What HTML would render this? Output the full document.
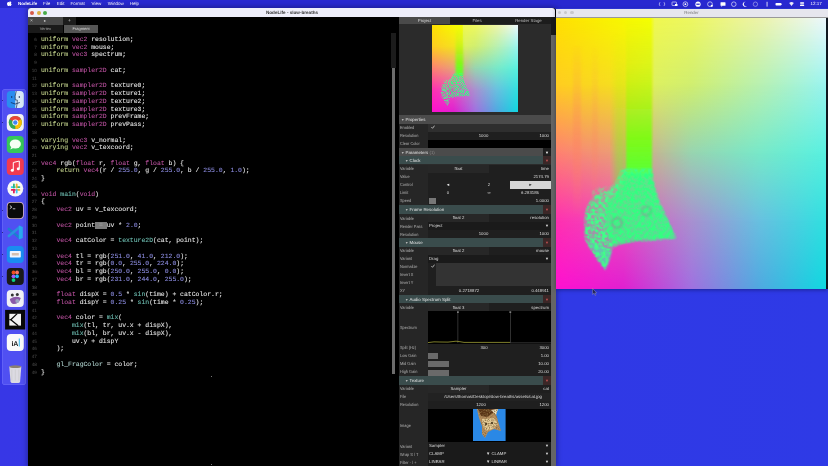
<!DOCTYPE html>
<html><head><meta charset="utf-8">
<style>
*{margin:0;padding:0;box-sizing:border-box}
html,body{width:828px;height:466px;overflow:hidden}
body{text-rendering:geometricPrecision;background:linear-gradient(to right,#3737e6,#3238e6 40%,#2e3ae6);font-family:"Liberation Sans",sans-serif;position:relative}
.a{position:absolute}
.t{position:absolute;font-size:4.3px;line-height:8px;white-space:nowrap;color:#ccc}
#menubar{will-change:transform;left:0;top:0;width:828px;height:8px;background:#2828d0;color:#fff;font-size:4.5px;font-weight:bold}
#menubar span{position:absolute;top:1.2px;line-height:6px}
#dock{left:2px;top:88px;width:25px;height:297px;background:#5656ee;border-radius:4px}
#main{left:28px;top:8.3px;width:528px;height:458px;background:#000;border-radius:3px 3px 0 0;overflow:hidden;box-shadow:0 0 5px 1px rgba(0,0,20,0.35)}
#titlebar{left:28px;top:8.3px;width:526.5px;height:8.9px;background:#eeeefa;border-radius:3px 3px 0 0}
.tl{position:absolute;top:2.5px;width:4px;height:4px;border-radius:50%}
#title{will-change:transform;left:266px;top:9.7px;font-size:4.6px;font-weight:bold;color:#333;line-height:6px}
#tab1{left:28px;top:17.2px;width:34.7px;height:7.6px;background:#474747}
#tab2{left:62.7px;top:17.2px;width:13.3px;height:7.6px;background:#1c1c1c}
#vtab{left:28px;top:24.8px;width:34.7px;height:8.7px;background:#1a1a1a;color:#aaa;font-size:4px;text-align:center;line-height:8.7px}
#ftab{left:63.6px;top:24.8px;width:34.8px;height:8.7px;background:#555;color:#ddd;font-size:4px;text-align:center;line-height:8.7px}
#nums{will-change:transform;left:28px;top:36.1px;width:8.9px;text-align:right;font-family:"Liberation Sans",sans-serif;font-size:4.6px;line-height:7.74px;color:#4c4c4c;white-space:pre}
#code{will-change:transform;-webkit-text-stroke:0.08px currentColor;left:41.1px;top:35.9px;font-family:"Liberation Mono",monospace;font-size:6.45px;line-height:7.74px;color:#e6e6e6;white-space:pre}
#code i{font-style:normal}
#code .k{color:#c4d48e}
#code .t{position:static;font-size:inherit;line-height:inherit;color:#bc52a0}
#code .f{color:#6fc0b4}
#code .g{color:#b0d4d0}
#code .n{color:#8c8ce0}
#code .sel{font-weight:normal;background:#7c7c7c;color:#a0a0a0}
#render{left:555.6px;top:8.7px;width:272.4px;height:280px;background:#333;overflow:hidden;box-shadow:0 1px 4px rgba(0,0,30,0.4)}
#rtitle{left:555.6px;top:8.7px;width:272.4px;height:8.8px;background:#e6e6ee}

</style></head><body>
<div id="menubar" class="a">
<svg class="a" style="left:7px;top:1.4px" width="5" height="5.5" viewBox="0 0 10 11"><path d="M5 2.6 C6 1 8.2 1.2 9 2.6 C7.6 3.4 7.6 5.6 9.3 6.4 C8.8 8 7.6 10.4 6.3 10.2 C5.6 10.1 5.3 9.7 4.6 9.7 C3.9 9.7 3.5 10.2 2.8 10.2 C1.5 10.2 0 7.6 0 5.4 C0 3 1.8 2 3 2 C3.9 2 4.4 2.6 5 2.6 Z M5 2.2 C5 1 6 0.2 7 0 C7.1 1.2 6.1 2.2 5 2.2 Z" fill="#fff"/></svg>
<span style="left:18px">NodeLife</span>
<span style="left:43px;font-weight:normal">File</span>
<span style="left:56.8px;font-weight:normal">Edit</span>
<span style="left:70.6px;font-weight:normal">Format</span>
<span style="left:91.6px;font-weight:normal">View</span>
<span style="left:107.7px;font-weight:normal">Window</span>
<span style="left:129.8px;font-weight:normal">Help</span>
<span style="left:810.5px;font-weight:normal">12:17</span><svg class="a" style="left:650px;top:0" width="160" height="8" viewBox="650 0 160 8"><path d="M660 2.2 q-1.6 1.8 0 3.8 M664 2.2 q1.6 1.8 0 3.8" stroke="#fff" stroke-width="0.6" fill="none" opacity="0.9"/><rect x="672" y="2" width="4.5" height="3.5" rx="0.5" stroke="#fff" stroke-width="0.6" fill="none"/><rect x="675" y="4" width="2.5" height="2" fill="#fff"/><circle cx="685.4" cy="4.2" r="2.4" stroke="#fff" stroke-width="0.6" fill="none"/><circle cx="685.4" cy="4.2" r="0.9" fill="#fff"/><circle cx="698" cy="4.2" r="2.6" fill="#fff"/><rect x="696.3" y="3.6" width="3.4" height="1.2" fill="#2222c4"/><circle cx="710" cy="4.2" r="2.4" stroke="#fff" stroke-width="0.6" fill="none"/><circle cx="711.8" cy="5.8" r="1.1" fill="#fff"/><rect x="720.5" y="2.2" width="5" height="3.6" rx="0.6" fill="#fff"/><path d="M721.5 5.5 l-0.5 1.2 l1.8 -1" fill="#fff"/><circle cx="733.8" cy="4.2" r="2.3" stroke="#fff" stroke-width="0.6" fill="none"/><path d="M745.5 1.8 a2.5 2.5 0 1 0 1.3 4.4 a2 2 0 0 1 -1.3 -4.4 Z" fill="#fff"/><circle cx="755.4" cy="4.2" r="2.2" stroke="#fff" stroke-width="0.5" fill="none" opacity="0.8"/><rect x="766.6" y="1.8" width="0.9" height="4.8" fill="#fff" opacity="0.9"/><rect x="775.5" y="3" width="5.8" height="2.6" rx="0.8" fill="#fff"/><rect x="781.5" y="3.6" width="0.5" height="1.4" fill="#fff"/><path d="M789.2 3 q2.3 -2 4.6 0 l-2.3 3 Z" fill="#fff" opacity="0.9"/><rect x="800" y="2.2" width="4.2" height="1.5" rx="0.7" fill="#fff"/><rect x="800" y="4.6" width="4.2" height="1.5" rx="0.7" fill="#fff"/></svg>
</div>
<div class="a" style="left:1.9px;top:88.5px;width:24px;height:296px;background:#5050f2;border-radius:3.5px;box-shadow:0 0 0 0.5px #7070fa inset"></div>
<div class="a" style="left:2.4px;top:99.5px;width:1px;height:1px;border-radius:50%;background:#1a1a60"></div>
<div class="a" style="left:2.4px;top:121.5px;width:1px;height:1px;border-radius:50%;background:#1a1a60"></div>
<div class="a" style="left:2.4px;top:209.5px;width:1px;height:1px;border-radius:50%;background:#1a1a60"></div>
<div class="a" style="left:2.4px;top:231.5px;width:1px;height:1px;border-radius:50%;background:#1a1a60"></div>
<div class="a" style="left:2.4px;top:253.5px;width:1px;height:1px;border-radius:50%;background:#1a1a60"></div>
<div class="a" style="left:2.4px;top:275.5px;width:1px;height:1px;border-radius:50%;background:#1a1a60"></div>
<svg class="a" style="left:0;top:0" width="30" height="400" viewBox="0 0 30 400"><rect x="6.8" y="91" width="17" height="17" rx="4" fill="#2a8cf0" /><path d="M15.3 91 h4.5 a4 4 0 0 1 4 4 v9 a4 4 0 0 1 -4 4 h-4.5 Z" fill="#d8e8f8"/><path d="M16.3 91 q-2 6 -1 9 h2 q0 4 -1 8" stroke="#1a3050" stroke-width="0.7" fill="none"/><rect x="11.3" y="96" width="0.9" height="2" fill="#143060"/><rect x="18.8" y="96" width="0.9" height="2" fill="#143060"/><path d="M10.8 102.5 q4.5 3 9 0" stroke="#143060" stroke-width="0.8" fill="none"/><rect x="6.8" y="114" width="17" height="17" rx="4" fill="#f4f4f4" /><circle cx="15.3" cy="122.5" r="6.6" fill="#34a853"/><path d="M15.3 122.5 L9.600000000000001 119.2 A6.6 6.6 0 0 1 21.0 119.2 Z" fill="#ea4335"/><path d="M15.3 122.5 L21.0 119.2 A6.6 6.6 0 0 1 15.3 129.1 Z" fill="#fbbc05"/><circle cx="15.3" cy="122.5" r="3" fill="#fff"/><circle cx="15.3" cy="122.5" r="2.2" fill="#4285f4"/><rect x="6.8" y="136" width="17" height="17" rx="4" fill="#35c759" /><ellipse cx="15.3" cy="144" rx="5.6" ry="4.6" fill="#f4fff4"/><path d="M11.3 147 l-1 2.6 l3 -1.6 Z" fill="#f4fff4"/><rect x="6.8" y="158" width="17" height="17" rx="4" fill="#f23a50" /><path d="M13.3 170 v-7.5 l6 -1.5 v7.5" stroke="#fff" stroke-width="1" fill="none"/><circle cx="12.3" cy="170.2" r="1.5" fill="#fff"/><circle cx="18.3" cy="168.7" r="1.5" fill="#fff"/><circle cx="15.3" cy="188.5" r="8" fill="#f8f8f8"/><rect x="10.8" y="186.2" width="5" height="1.8" rx="0.9" fill="#36c5f0"/><rect x="13.0" y="183.5" width="1.8" height="5" rx="0.9" fill="#2eb67d"/><rect x="15.8" y="186.2" width="4.5" height="1.8" rx="0.9" fill="#2eb67d"/><rect x="15.8" y="183.5" width="1.8" height="5" rx="0.9" fill="#ecb22e"/><rect x="10.8" y="189.0" width="5" height="1.8" rx="0.9" fill="#e01e5a"/><rect x="13.0" y="189.0" width="1.8" height="4.5" rx="0.9" fill="#e01e5a"/><rect x="15.8" y="189.0" width="4.5" height="1.8" rx="0.9" fill="#ecb22e"/><rect x="15.8" y="189.0" width="1.8" height="4.5" rx="0.9" fill="#36c5f0"/><rect x="6.8" y="202" width="17" height="17" rx="4" fill="#d8b8c8" /><rect x="7.6" y="202.8" width="15.4" height="15.4" rx="3.4" fill="#0a0a0a"/><path d="M9.8 205.5 l2 1.6 l-2 1.6" stroke="#fff" stroke-width="0.8" fill="none"/><rect x="12.8" y="208.5" width="2.5" height="0.7" fill="#fff"/><path d="M8.8 229 L19.8 238" stroke="#1a7fd0" stroke-width="2.6" stroke-linecap="round"/><path d="M8.8 236 L19.8 227" stroke="#2a8fe0" stroke-width="2.6" stroke-linecap="round"/><path d="M18.8 225.5 L22.8 227 V238 L18.8 239.5 Z" fill="#28a8f0"/><rect x="6.8" y="246" width="17" height="17" rx="4" fill="#1a8cf0" /><rect x="9.8" y="251" width="11" height="6.5" rx="0.8" fill="#eef4ff"/><rect x="11.8" y="253" width="7" height="2.5" fill="#c9a890" opacity="0.7"/><rect x="6.8" y="268" width="17" height="17" rx="4" fill="#1a1a1a" /><circle cx="13.5" cy="272.5" r="1.9" fill="#f24e1e"/><circle cx="17.1" cy="272.5" r="1.9" fill="#ff7262"/><circle cx="13.5" cy="276.3" r="1.9" fill="#a259ff"/><circle cx="17.1" cy="276.3" r="1.9" fill="#1abcfe"/><circle cx="13.5" cy="280.1" r="1.9" fill="#0acf83"/><rect x="6.8" y="290" width="17" height="17" rx="4" fill="#f2f2f6" /><circle cx="12.3" cy="295" r="1.5" fill="#333"/><circle cx="17.3" cy="294.5" r="1.5" fill="#333"/><path d="M9.8 299 q6 -4 11 -1 q-2 6 -7 6 q-3 0 -4 -5 Z" fill="#8a5aa8"/><circle cx="17.3" cy="301" r="2" fill="#9aa4c0"/><rect x="5.1" y="309.9" width="20.1" height="19.6" fill="#080808"/><rect x="9.3" y="313.8" width="11.7" height="11.8" fill="#f2f2f2"/><path d="M17.2 313.6 L10.8 319.7 L18.2 325.8" stroke="#080808" stroke-width="1.3" fill="none"/><path d="M9.2 319.7 L11 319.7" stroke="#080808" stroke-width="0.9"/><rect x="6.8" y="334" width="17" height="17" rx="4" fill="#fafafa" /><text x="11.399999999999999" y="345.8" font-family="Liberation Sans" font-weight="bold" font-size="7" fill="#222">iA</text><rect x="18.8" y="338.5" width="0.9" height="8" fill="#1ab0e8"/><path d="M9.3 366.5 h12 l-1.2 15 q-0.3 1.5 -1.8 1.5 h-6 q-1.5 0 -1.8 -1.5 Z" fill="#e4e2e0" opacity="0.95"/><ellipse cx="15.3" cy="366.7" rx="6" ry="1.4" fill="#8a8070"/><path d="M11.8 369.5 v11 M15.3 369.5 v11 M18.8 369.5 v11" stroke="#c4c4c4" stroke-width="0.5"/></svg>
<div id="main" class="a"></div>
<div id="titlebar" class="a">
  <div class="tl" style="left:1.9px;background:#d65a4a"></div>
  <div class="tl" style="left:8.5px;background:#dcb040"></div>
  <div class="tl" style="left:14.8px;background:#48aa48"></div>
</div>
<div id="title" class="a">NodeLife - slow-breaths</div>
<div id="tab1" class="a"></div><div id="tab2" class="a"></div>
<div class="t" style="left:30px;top:17px;color:#ccc;font-size:5px">&#215;</div>
<div class="t" style="left:43.5px;top:17px;color:#ccc;font-size:4px">&#9679;</div>
<div class="t" style="left:68px;top:17px;color:#ccc;font-size:5px">+</div>
<div id="vtab" class="a">Vertex</div><div id="ftab" class="a">Fragment</div>
<div id="nums" class="a">6
7
8
9
10
11
12
13
14
15
16
17
18
19
20
21
22
23
24
25
26
27
28
29
30
31
32
33
34
35
36
37
38
39
40
41
42
43
44
45
46
47
48
49</div>
<div id="code" class="a"><i class="k">uniform</i> <i class="t">vec2</i> resolution;
<i class="k">uniform</i> <i class="t">vec2</i> mouse;
<i class="k">uniform</i> <i class="t">vec3</i> spectrum;

<i class="k">uniform</i> <i class="t">sampler2D</i> cat;

<i class="k">uniform</i> <i class="t">sampler2D</i> texture0;
<i class="k">uniform</i> <i class="t">sampler2D</i> texture1;
<i class="k">uniform</i> <i class="t">sampler2D</i> texture2;
<i class="k">uniform</i> <i class="t">sampler2D</i> texture3;
<i class="k">uniform</i> <i class="t">sampler2D</i> prevFrame;
<i class="k">uniform</i> <i class="t">sampler2D</i> prevPass;

<i class="k">varying</i> <i class="t">vec3</i> v_normal;
<i class="k">varying</i> <i class="t">vec2</i> v_texcoord;

<i class="t">vec4</i> rgb(<i class="t">float</i> r, <i class="t">float</i> g, <i class="t">float</i> b) {
    <i class="k">return</i> <i class="t">vec4</i>(r / <i class="n">255.0</i>, g / <i class="n">255.0</i>, b / <i class="n">255.0</i>, <i class="n">1.0</i>);
}

<i class="t">void</i> <i class="f">main</i>(<i class="t">void</i>)
{
    <i class="t">vec2</i> uv = v_texcoord;

    <i class="t">vec2</i> point<b class="sel"> = </b>uv * <i class="n">2.0</i>;

    <i class="t">vec4</i> catColor = <i class="f">texture2D</i>(cat, point);

    <i class="t">vec4</i> tl = rgb(<i class="n">251.0</i>, <i class="n">41.0</i>, <i class="n">212.0</i>);
    <i class="t">vec4</i> tr = rgb(<i class="n">0.0</i>, <i class="n">255.0</i>, <i class="n">224.0</i>);
    <i class="t">vec4</i> bl = rgb(<i class="n">250.0</i>, <i class="n">255.0</i>, <i class="n">0.0</i>);
    <i class="t">vec4</i> br = rgb(<i class="n">231.0</i>, <i class="n">244.0</i>, <i class="n">255.0</i>);

    <i class="t">float</i> dispX = <i class="n">0.5</i> * <i class="f">sin</i>(time) + catColor.r;
    <i class="t">float</i> dispY = <i class="n">0.25</i> * <i class="f">sin</i>(time * <i class="n">0.25</i>);

    <i class="t">vec4</i> color = <i class="f">mix</i>(
        <i class="f">mix</i>(tl, tr, uv.x + dispX),
        <i class="f">mix</i>(bl, br, uv.x - dispX),
        uv.y + dispY
    );

    <i class="g">gl_FragColor</i> = color;
}</div>
<div class="a" style="left:390.8px;top:33px;width:5px;height:35.4px;background:#1c1c1c"></div>
<div class="a" style="left:391.7px;top:68.4px;width:3.6px;height:306px;background:#6c6c6c"></div>
<div class="a" style="left:0;top:0;width:828px;height:466px;will-change:transform"><div class="a" style="left:399.00px;top:17.20px;width:156.50px;height:448.80px;background:#2b2b2b;"></div>
<div class="a" style="left:399.00px;top:17.20px;width:51.00px;height:7.10px;background:#4a4a4a;"></div>
<div class="a" style="left:450.00px;top:17.20px;width:101.00px;height:7.10px;background:#1c1c1c;"></div>
<div class="t" style="top:17.30px;left:394.50px;width:60px;text-align:center;color:#ddd;">Project</div>
<div class="t" style="top:17.30px;left:447.00px;width:60px;text-align:center;color:#bbb;">Files</div>
<div class="t" style="top:17.30px;left:498.50px;width:60px;text-align:center;color:#bbb;">Render Stage</div>
<div class="a" style="left:551.00px;top:17.20px;width:4.50px;height:17.80px;background:#1a1a1a;"></div>
<div class="a" style="left:551.00px;top:35.00px;width:4.50px;height:431.00px;background:#656565;"></div>
<svg class="a" style="left:431.7px;top:25.4px" width="86.3" height="86.6" viewBox="0 0 270.4 271.5" preserveAspectRatio="none"><defs><linearGradient id="pg0" gradientUnits="userSpaceOnUse" x1="0" y1="0" x2="270.4" y2="0"><stop offset="0" stop-color="#ffe000"/><stop offset="0.25" stop-color="#f8f800"/><stop offset="0.35" stop-color="#f6ff00"/><stop offset="0.365" stop-color="#f0f850"/><stop offset="0.5" stop-color="#eef860"/><stop offset="0.75" stop-color="#eef4a8"/><stop offset="1" stop-color="#eef8ff"/></linearGradient><linearGradient id="pg1" gradientUnits="userSpaceOnUse" x1="0" y1="0" x2="270.4" y2="0"><stop offset="0" stop-color="#ffcc20"/><stop offset="0.25" stop-color="#f4e020"/><stop offset="0.35" stop-color="#e8ec30"/><stop offset="0.365" stop-color="#dcf060"/><stop offset="0.5" stop-color="#d0ee70"/><stop offset="0.75" stop-color="#b8f0b0"/><stop offset="1" stop-color="#98f4f0"/></linearGradient><linearGradient id="pm1" gradientUnits="userSpaceOnUse" x1="0" y1="0.0" x2="0" y2="67.875"><stop offset="0" stop-color="#000"/><stop offset="1" stop-color="#fff"/></linearGradient><mask id="pk1" maskUnits="userSpaceOnUse" x="-5" y="-5" width="280.4" height="281.5"><rect x="-5" y="-5" width="280.4" height="281.5" fill="url(#pm1)"/></mask><linearGradient id="pg2" gradientUnits="userSpaceOnUse" x1="0" y1="0" x2="270.4" y2="0"><stop offset="0" stop-color="#ff8070"/><stop offset="0.25" stop-color="#e8a078"/><stop offset="0.5" stop-color="#98d4b0"/><stop offset="0.75" stop-color="#78e8c8"/><stop offset="1" stop-color="#58f0e0"/></linearGradient><linearGradient id="pm2" gradientUnits="userSpaceOnUse" x1="0" y1="67.875" x2="0" y2="135.75"><stop offset="0" stop-color="#000"/><stop offset="1" stop-color="#fff"/></linearGradient><mask id="pk2" maskUnits="userSpaceOnUse" x="-5" y="-5" width="280.4" height="281.5"><rect x="-5" y="-5" width="280.4" height="281.5" fill="url(#pm2)"/></mask><linearGradient id="pg3" gradientUnits="userSpaceOnUse" x1="0" y1="0" x2="270.4" y2="0"><stop offset="0" stop-color="#ff30b0"/><stop offset="0.25" stop-color="#e850c0"/><stop offset="0.5" stop-color="#a890d0"/><stop offset="0.75" stop-color="#68c0e0"/><stop offset="1" stop-color="#30e0e0"/></linearGradient><linearGradient id="pm3" gradientUnits="userSpaceOnUse" x1="0" y1="135.75" x2="0" y2="203.625"><stop offset="0" stop-color="#000"/><stop offset="1" stop-color="#fff"/></linearGradient><mask id="pk3" maskUnits="userSpaceOnUse" x="-5" y="-5" width="280.4" height="281.5"><rect x="-5" y="-5" width="280.4" height="281.5" fill="url(#pm3)"/></mask><linearGradient id="pg4" gradientUnits="userSpaceOnUse" x1="0" y1="0" x2="270.4" y2="0"><stop offset="0" stop-color="#ff10d0"/><stop offset="0.25" stop-color="#e020d0"/><stop offset="0.5" stop-color="#a070e0"/><stop offset="0.75" stop-color="#50a8e0"/><stop offset="1" stop-color="#10d8e0"/></linearGradient><linearGradient id="pm4" gradientUnits="userSpaceOnUse" x1="0" y1="203.625" x2="0" y2="271.5"><stop offset="0" stop-color="#000"/><stop offset="1" stop-color="#fff"/></linearGradient><mask id="pk4" maskUnits="userSpaceOnUse" x="-5" y="-5" width="280.4" height="281.5"><rect x="-5" y="-5" width="280.4" height="281.5" fill="url(#pm4)"/></mask><linearGradient id="pstr" gradientUnits="userSpaceOnUse" x1="0" y1="0" x2="0" y2="150">
<stop offset="0" stop-color="#a8ff00" stop-opacity="0"/><stop offset="0.3" stop-color="#b0ff00" stop-opacity="0.25"/><stop offset="0.55" stop-color="#98ff08" stop-opacity="0.6"/><stop offset="0.8" stop-color="#7aff10" stop-opacity="0.92"/><stop offset="1" stop-color="#60ff30" stop-opacity="1"/>
</linearGradient>
<linearGradient id="pstr2" gradientUnits="userSpaceOnUse" x1="0" y1="20" x2="0" y2="200">
<stop offset="0" stop-color="#ff8060" stop-opacity="0"/><stop offset="0.6" stop-color="#ff8060" stop-opacity="0.35"/><stop offset="1" stop-color="#ff8060" stop-opacity="0"/>
</linearGradient>
<filter id="pb1" x="-30%" y="-30%" width="160%" height="160%"><feGaussianBlur stdDeviation="1.1"/></filter>
<filter id="pb2" x="-30%" y="-30%" width="160%" height="160%"><feGaussianBlur stdDeviation="3"/></filter>
<filter id="ptx" x="-10%" y="-10%" width="120%" height="120%"><feGaussianBlur in="SourceGraphic" stdDeviation="1.1" result="bl"/><feTurbulence type="fractalNoise" baseFrequency="0.28" numOctaves="2" seed="7" result="n"/><feColorMatrix in="n" type="matrix" values="0 0 0 0 0  0 0 0 0 0  0 0 0 0 0  3.2 0 0 0 -1.1" result="a"/><feComposite in="bl" in2="a" operator="in"/></filter>
</defs><rect x="-5" y="-5" width="280.4" height="281.5" fill="url(#pg0)"/><rect x="-5" y="-5" width="280.4" height="281.5" fill="url(#pg1)" mask="url(#pk1)"/><rect x="-5" y="-5" width="280.4" height="281.5" fill="url(#pg2)" mask="url(#pk2)"/><rect x="-5" y="-5" width="280.4" height="281.5" fill="url(#pg3)" mask="url(#pk3)"/><rect x="-5" y="-5" width="280.4" height="281.5" fill="url(#pg4)" mask="url(#pk4)"/><rect x="74" y="0" width="24" height="160" fill="url(#pstr)" filter="url(#pb2)"/><g filter="url(#ptx)"><path d="M29 209 Q28 196 32 188 Q38 178 50 174 Q60 170 66 152 L96 152 Q97 172 102 182 L108 197 L120 221 L96 223.6 L73 223.6 Q62 226 55.5 232 L49.6 252.8 Q40 242 35 232 Q30 226 29 220 Z" fill="#40ff88"/><path d="M68 156 L96 156 Q99 176 105 188.5 L120 221 L87.6 223.6 Q70 225 58 229 Q50 220 49.6 209 Q48 194 52 184 Q62 176 66 166 Z" fill="#30ff80"/><ellipse cx="48" cy="176" rx="12" ry="6" fill="#60f090" opacity="0.5"/></g><circle cx="61" cy="206" r="5" fill="none" stroke="#a05890" stroke-width="1.4" opacity="0.45" filter="url(#pb1)"/><circle cx="90.5" cy="194" r="4.5" fill="none" stroke="#a05890" stroke-width="1.4" opacity="0.4" filter="url(#pb1)"/></svg>
<div class="a" style="left:399.00px;top:115.20px;width:152.00px;height:8.40px;background:#4b4b4b;"></div>
<div class="t" style="top:115.90px;left:401.00px;color:#bbb;font-size:3.5px;">&#9660;</div>
<div class="t" style="top:115.90px;left:405.50px;color:#e4e4e4;font-size:4.4px;">Properties</div>
<div class="a" style="left:399.00px;top:123.60px;width:29.00px;height:8.00px;background:#262626;"></div>
<div class="a" style="left:428.00px;top:123.60px;width:123.00px;height:8.00px;background:#2e2e2e;"></div>
<div class="t" style="top:124.40px;left:400.00px;color:#b4b4b4;font-size:3.9px;transform:scaleY(1.12);transform-origin:0 50%;">Enabled</div>
<svg class="a" style="left:430.5px;top:125.4px" width="4" height="4" viewBox="0 0 4 4"><path d="M0.4 2.2 L1.5 3.3 L3.6 0.6" stroke="#eee" stroke-width="0.7" fill="none"/></svg>
<div class="a" style="left:399.00px;top:131.60px;width:29.00px;height:8.00px;background:#262626;"></div>
<div class="a" style="left:428.00px;top:131.60px;width:123.00px;height:8.00px;background:#1f1f1f;"></div>
<div class="t" style="top:132.40px;left:400.00px;color:#b4b4b4;font-size:3.9px;transform:scaleY(1.12);transform-origin:0 50%;">Resolution</div>
<div class="t" style="top:132.10px;left:453.50px;width:60px;text-align:center;color:#ddd;">1000</div>
<div class="t" style="top:132.10px;right:279.00px;color:#ddd;">1000</div>
<div class="a" style="left:399.00px;top:139.60px;width:29.00px;height:8.00px;background:#262626;"></div>
<div class="a" style="left:428.00px;top:139.60px;width:123.00px;height:8.00px;background:#000;"></div>
<div class="t" style="top:140.40px;left:400.00px;color:#b4b4b4;font-size:3.9px;transform:scaleY(1.12);transform-origin:0 50%;">Clear Color</div>
<div class="a" style="left:399.00px;top:148.00px;width:144.00px;height:8.20px;background:#4b4b4b;"></div>
<div class="t" style="top:148.60px;left:401.00px;color:#bbb;font-size:3.5px;">&#9660;</div>
<div class="t" style="top:148.60px;left:405.50px;color:#e4e4e4;font-size:4.4px;">Parameters <span style="color:#8a8a8a">(1)</span></div>
<div class="a" style="left:543.00px;top:148.00px;width:8.00px;height:8.20px;background:#1e1e1e;"></div>
<div class="t" style="top:148.60px;left:517.00px;width:60px;text-align:center;color:#eee;font-size:4px;">&#9660;</div>
<div class="a" style="left:399.00px;top:156.20px;width:144.00px;height:8.30px;background:#3a4c4c;"></div>
<div class="t" style="top:156.85px;left:405.00px;color:#bbb;font-size:3.5px;">&#9660;</div>
<div class="t" style="top:156.85px;left:409.50px;color:#e4e4e4;font-size:4.4px;">Clock</div>
<div class="a" style="left:543.00px;top:156.20px;width:8.00px;height:8.30px;background:#3b2727;"></div>
<div class="t" style="top:156.85px;left:517.00px;width:60px;text-align:center;color:#c05050;font-size:4px;">&#9660;</div>
<div class="a" style="left:399.00px;top:164.50px;width:29.00px;height:8.00px;background:#262626;"></div>
<div class="a" style="left:428.00px;top:164.50px;width:123.00px;height:8.00px;background:#1f1f1f;"></div>
<div class="t" style="top:165.30px;left:400.00px;color:#b4b4b4;font-size:3.9px;transform:scaleY(1.12);transform-origin:0 50%;">Variable</div>
<div class="a" style="left:428.00px;top:164.50px;width:61.00px;height:8.00px;background:#272727;"></div>
<div class="t" style="top:165.00px;left:428.50px;width:60px;text-align:center;color:#ddd;">float</div>
<div class="t" style="top:165.00px;right:279.00px;color:#ddd;">time</div>
<div class="a" style="left:399.00px;top:172.50px;width:29.00px;height:8.00px;background:#262626;"></div>
<div class="a" style="left:428.00px;top:172.50px;width:123.00px;height:8.00px;background:#1f1f1f;"></div>
<div class="t" style="top:173.30px;left:400.00px;color:#b4b4b4;font-size:3.9px;transform:scaleY(1.12);transform-origin:0 50%;">Value</div>
<div class="t" style="top:173.00px;right:279.00px;color:#ddd;">2174.79</div>
<div class="a" style="left:399.00px;top:180.50px;width:29.00px;height:8.00px;background:#262626;"></div>
<div class="a" style="left:428.00px;top:180.50px;width:123.00px;height:8.00px;background:#1f1f1f;"></div>
<div class="t" style="top:181.30px;left:400.00px;color:#b4b4b4;font-size:3.9px;transform:scaleY(1.12);transform-origin:0 50%;">Control</div>
<div class="t" style="top:181.00px;left:418.00px;width:60px;text-align:center;color:#eee;font-size:4px;">&#9668;</div>
<div class="t" style="top:181.00px;left:459.00px;width:60px;text-align:center;color:#ddd;">2</div>
<div class="a" style="left:510.00px;top:181.00px;width:41.00px;height:7.50px;background:#d6d6d6;"></div>
<div class="t" style="top:181.00px;left:500.50px;width:60px;text-align:center;color:#222;font-size:4px;">&#9658;</div>
<div class="a" style="left:399.00px;top:188.50px;width:29.00px;height:8.00px;background:#262626;"></div>
<div class="a" style="left:428.00px;top:188.50px;width:123.00px;height:8.00px;background:#1f1f1f;"></div>
<div class="t" style="top:189.30px;left:400.00px;color:#b4b4b4;font-size:3.9px;transform:scaleY(1.12);transform-origin:0 50%;">Limit</div>
<div class="t" style="top:189.00px;left:418.00px;width:60px;text-align:center;color:#ddd;">0</div>
<div class="t" style="top:189.00px;left:459.00px;width:60px;text-align:center;color:#ddd;">&#8734;</div>
<div class="t" style="top:189.00px;left:500.00px;width:60px;text-align:center;color:#ddd;">6.283185</div>
<div class="a" style="left:399.00px;top:196.50px;width:29.00px;height:8.00px;background:#262626;"></div>
<div class="a" style="left:428.00px;top:196.50px;width:123.00px;height:8.00px;background:#1f1f1f;"></div>
<div class="t" style="top:197.30px;left:400.00px;color:#b4b4b4;font-size:3.9px;transform:scaleY(1.12);transform-origin:0 50%;">Speed</div>
<div class="a" style="left:429.00px;top:197.50px;width:7.00px;height:6.00px;background:#777;"></div>
<div class="t" style="top:197.00px;right:279.00px;color:#ddd;">1.0000</div>
<div class="a" style="left:399.00px;top:205.40px;width:144.00px;height:8.40px;background:#3a4c4c;"></div>
<div class="t" style="top:206.10px;left:405.00px;color:#bbb;font-size:3.5px;">&#9660;</div>
<div class="t" style="top:206.10px;left:409.50px;color:#e4e4e4;font-size:4.4px;">Frame Resolution</div>
<div class="a" style="left:543.00px;top:205.40px;width:8.00px;height:8.40px;background:#3b2727;"></div>
<div class="t" style="top:206.10px;left:517.00px;width:60px;text-align:center;color:#c05050;font-size:4px;">&#9660;</div>
<div class="a" style="left:399.00px;top:213.80px;width:29.00px;height:8.00px;background:#262626;"></div>
<div class="a" style="left:428.00px;top:213.80px;width:123.00px;height:8.00px;background:#1f1f1f;"></div>
<div class="t" style="top:214.60px;left:400.00px;color:#b4b4b4;font-size:3.9px;transform:scaleY(1.12);transform-origin:0 50%;">Variable</div>
<div class="a" style="left:428.00px;top:213.80px;width:61.00px;height:8.00px;background:#272727;"></div>
<div class="t" style="top:214.30px;left:428.50px;width:60px;text-align:center;color:#ddd;">float 2</div>
<div class="t" style="top:214.30px;right:279.00px;color:#ddd;">resolution</div>
<div class="a" style="left:399.00px;top:221.80px;width:29.00px;height:8.00px;background:#262626;"></div>
<div class="a" style="left:428.00px;top:221.80px;width:123.00px;height:8.00px;background:#1a1a1a;"></div>
<div class="t" style="top:222.60px;left:400.00px;color:#b4b4b4;font-size:3.9px;transform:scaleY(1.12);transform-origin:0 50%;">Render Pass</div>
<div class="t" style="top:222.30px;left:429.00px;color:#ddd;">Project</div>
<div class="t" style="top:222.30px;right:279.00px;color:#ddd;font-size:4px;">&#9660;</div>
<div class="a" style="left:399.00px;top:229.80px;width:29.00px;height:8.00px;background:#262626;"></div>
<div class="a" style="left:428.00px;top:229.80px;width:123.00px;height:8.00px;background:#1f1f1f;"></div>
<div class="t" style="top:230.60px;left:400.00px;color:#b4b4b4;font-size:3.9px;transform:scaleY(1.12);transform-origin:0 50%;">Resolution</div>
<div class="t" style="top:230.30px;left:453.50px;width:60px;text-align:center;color:#ddd;">1000</div>
<div class="t" style="top:230.30px;right:279.00px;color:#ddd;">1000</div>
<div class="a" style="left:399.00px;top:238.20px;width:144.00px;height:8.40px;background:#3a4c4c;"></div>
<div class="t" style="top:238.90px;left:405.00px;color:#bbb;font-size:3.5px;">&#9660;</div>
<div class="t" style="top:238.90px;left:409.50px;color:#e4e4e4;font-size:4.4px;">Mouse</div>
<div class="a" style="left:543.00px;top:238.20px;width:8.00px;height:8.40px;background:#3b2727;"></div>
<div class="t" style="top:238.90px;left:517.00px;width:60px;text-align:center;color:#c05050;font-size:4px;">&#9660;</div>
<div class="a" style="left:399.00px;top:246.60px;width:29.00px;height:8.00px;background:#262626;"></div>
<div class="a" style="left:428.00px;top:246.60px;width:123.00px;height:8.00px;background:#1f1f1f;"></div>
<div class="t" style="top:247.40px;left:400.00px;color:#b4b4b4;font-size:3.9px;transform:scaleY(1.12);transform-origin:0 50%;">Variable</div>
<div class="a" style="left:428.00px;top:246.60px;width:61.00px;height:8.00px;background:#272727;"></div>
<div class="t" style="top:247.10px;left:428.50px;width:60px;text-align:center;color:#ddd;">float 2</div>
<div class="t" style="top:247.10px;right:279.00px;color:#ddd;">mouse</div>
<div class="a" style="left:399.00px;top:254.60px;width:29.00px;height:8.00px;background:#262626;"></div>
<div class="a" style="left:428.00px;top:254.60px;width:123.00px;height:8.00px;background:#1a1a1a;"></div>
<div class="t" style="top:255.40px;left:400.00px;color:#b4b4b4;font-size:3.9px;transform:scaleY(1.12);transform-origin:0 50%;">Variant</div>
<div class="t" style="top:255.10px;left:429.00px;color:#ddd;">Drag</div>
<div class="t" style="top:255.10px;right:279.00px;color:#ddd;font-size:4px;">&#9660;</div>
<div class="a" style="left:399.00px;top:262.60px;width:29.00px;height:8.00px;background:#262626;"></div>
<div class="a" style="left:428.00px;top:262.60px;width:123.00px;height:8.00px;background:#1f1f1f;"></div>
<div class="t" style="top:263.40px;left:400.00px;color:#b4b4b4;font-size:3.9px;transform:scaleY(1.12);transform-origin:0 50%;">Normalize</div>
<svg class="a" style="left:430.5px;top:264.4px" width="4" height="4" viewBox="0 0 4 4"><path d="M0.4 2.2 L1.5 3.3 L3.6 0.6" stroke="#eee" stroke-width="0.7" fill="none"/></svg>
<div class="a" style="left:399.00px;top:270.60px;width:29.00px;height:8.00px;background:#262626;"></div>
<div class="a" style="left:428.00px;top:270.60px;width:123.00px;height:8.00px;background:#1f1f1f;"></div>
<div class="t" style="top:271.40px;left:400.00px;color:#b4b4b4;font-size:3.9px;transform:scaleY(1.12);transform-origin:0 50%;">Invert X</div>
<div class="a" style="left:399.00px;top:278.60px;width:29.00px;height:8.00px;background:#262626;"></div>
<div class="a" style="left:428.00px;top:278.60px;width:123.00px;height:8.00px;background:#1f1f1f;"></div>
<div class="t" style="top:279.40px;left:400.00px;color:#b4b4b4;font-size:3.9px;transform:scaleY(1.12);transform-origin:0 50%;">Invert Y</div>
<div class="a" style="left:436.00px;top:262.60px;width:115.00px;height:23.40px;background:#333333;"></div>
<div class="a" style="left:399.00px;top:286.60px;width:29.00px;height:8.00px;background:#262626;"></div>
<div class="a" style="left:428.00px;top:286.60px;width:123.00px;height:8.00px;background:#1f1f1f;"></div>
<div class="t" style="top:287.40px;left:400.00px;color:#b4b4b4;font-size:3.9px;transform:scaleY(1.12);transform-origin:0 50%;">XY</div>
<div class="t" style="top:287.10px;left:439.00px;width:60px;text-align:center;color:#ddd;">0.2718872</div>
<div class="t" style="top:287.10px;right:279.00px;color:#ddd;">0.448911</div>
<div class="a" style="left:399.00px;top:295.00px;width:144.00px;height:8.30px;background:#3a4c4c;"></div>
<div class="t" style="top:295.65px;left:405.00px;color:#bbb;font-size:3.5px;">&#9660;</div>
<div class="t" style="top:295.65px;left:409.50px;color:#e4e4e4;font-size:4.4px;">Audio Spectrum Split</div>
<div class="a" style="left:543.00px;top:295.00px;width:8.00px;height:8.30px;background:#3b2727;"></div>
<div class="t" style="top:295.65px;left:517.00px;width:60px;text-align:center;color:#c05050;font-size:4px;">&#9660;</div>
<div class="a" style="left:399.00px;top:303.30px;width:29.00px;height:7.90px;background:#262626;"></div>
<div class="a" style="left:428.00px;top:303.30px;width:123.00px;height:7.90px;background:#1f1f1f;"></div>
<div class="t" style="top:304.05px;left:400.00px;color:#b4b4b4;font-size:3.9px;transform:scaleY(1.12);transform-origin:0 50%;">Variable</div>
<div class="a" style="left:428.00px;top:303.30px;width:61.00px;height:7.90px;background:#272727;"></div>
<div class="t" style="top:303.60px;left:428.50px;width:60px;text-align:center;color:#ddd;">float 3</div>
<div class="t" style="top:303.60px;right:279.00px;color:#ddd;">spectrum</div>
<div class="a" style="left:399.00px;top:311.10px;width:29.00px;height:32.50px;background:#262626;"></div>
<div class="a" style="left:428.00px;top:311.10px;width:123.00px;height:32.50px;background:#000;"></div>
<div class="t" style="top:324.15px;left:400.00px;color:#b4b4b4;font-size:3.9px;transform:scaleY(1.12);transform-origin:0 50%;">Spectrum</div>
<svg class="a" style="left:428px;top:311.1px" width="123" height="33" viewBox="0 0 123 33"><rect x="29.6" y="1.5" width="0.6" height="30.5" fill="#505050"/><rect x="82" y="1.5" width="0.6" height="30.5" fill="#505050"/><rect x="29" y="0.4" width="1.8" height="1.4" fill="#999"/><rect x="81.4" y="0.4" width="1.8" height="1.4" fill="#999"/><path d="M0 31.6 Q6 30.4 12 31 Q20 31.6 28 30.2 Q32 30.6 36 31.4 L82 31.4" stroke="#8c8c30" stroke-width="0.9" fill="none"/><rect x="82" y="31.6" width="41" height="0.6" fill="#555"/></svg>
<div class="a" style="left:399.00px;top:343.60px;width:29.00px;height:8.00px;background:#262626;"></div>
<div class="a" style="left:428.00px;top:343.60px;width:123.00px;height:8.00px;background:#1f1f1f;"></div>
<div class="t" style="top:344.40px;left:400.00px;color:#b4b4b4;font-size:3.9px;transform:scaleY(1.12);transform-origin:0 50%;">Split (Hz)</div>
<div class="t" style="top:344.10px;left:454.00px;width:60px;text-align:center;color:#ddd;">300</div>
<div class="t" style="top:344.10px;right:279.00px;color:#ddd;">3000</div>
<div class="a" style="left:399.00px;top:351.60px;width:29.00px;height:8.00px;background:#262626;"></div>
<div class="a" style="left:428.00px;top:351.60px;width:123.00px;height:8.00px;background:#1f1f1f;"></div>
<div class="t" style="top:352.40px;left:400.00px;color:#b4b4b4;font-size:3.9px;transform:scaleY(1.12);transform-origin:0 50%;">Low Gain</div>
<div class="a" style="left:428.30px;top:353.00px;width:9.70px;height:6.00px;background:#6a6a6a;"></div>
<div class="t" style="top:352.10px;right:279.00px;color:#ddd;">1.00</div>
<div class="a" style="left:399.00px;top:359.60px;width:29.00px;height:8.00px;background:#262626;"></div>
<div class="a" style="left:428.00px;top:359.60px;width:123.00px;height:8.00px;background:#1f1f1f;"></div>
<div class="t" style="top:360.40px;left:400.00px;color:#b4b4b4;font-size:3.9px;transform:scaleY(1.12);transform-origin:0 50%;">Mid Gain</div>
<div class="a" style="left:428.30px;top:361.00px;width:20.70px;height:6.00px;background:#6a6a6a;"></div>
<div class="t" style="top:360.10px;right:279.00px;color:#ddd;">10.00</div>
<div class="a" style="left:399.00px;top:367.60px;width:29.00px;height:8.00px;background:#262626;"></div>
<div class="a" style="left:428.00px;top:367.60px;width:123.00px;height:8.00px;background:#1f1f1f;"></div>
<div class="t" style="top:368.40px;left:400.00px;color:#b4b4b4;font-size:3.9px;transform:scaleY(1.12);transform-origin:0 50%;">High Gain</div>
<div class="a" style="left:428.30px;top:369.50px;width:20.70px;height:6.00px;background:#6a6a6a;"></div>
<div class="t" style="top:368.10px;right:279.00px;color:#ddd;">20.00</div>
<div class="a" style="left:399.00px;top:376.20px;width:144.00px;height:8.40px;background:#3a4c4c;"></div>
<div class="t" style="top:376.90px;left:405.00px;color:#bbb;font-size:3.5px;">&#9660;</div>
<div class="t" style="top:376.90px;left:409.50px;color:#e4e4e4;font-size:4.4px;">Texture</div>
<div class="a" style="left:543.00px;top:376.20px;width:8.00px;height:8.40px;background:#3b2727;"></div>
<div class="t" style="top:376.90px;left:517.00px;width:60px;text-align:center;color:#c05050;font-size:4px;">&#9660;</div>
<div class="a" style="left:399.00px;top:384.60px;width:29.00px;height:8.00px;background:#262626;"></div>
<div class="a" style="left:428.00px;top:384.60px;width:123.00px;height:8.00px;background:#1f1f1f;"></div>
<div class="t" style="top:385.40px;left:400.00px;color:#b4b4b4;font-size:3.9px;transform:scaleY(1.12);transform-origin:0 50%;">Variable</div>
<div class="a" style="left:428.00px;top:384.60px;width:61.00px;height:8.00px;background:#272727;"></div>
<div class="t" style="top:385.10px;left:428.50px;width:60px;text-align:center;color:#ddd;">Sampler</div>
<div class="t" style="top:385.10px;right:279.00px;color:#ddd;">cat</div>
<div class="a" style="left:399.00px;top:392.60px;width:29.00px;height:8.00px;background:#262626;"></div>
<div class="a" style="left:428.00px;top:392.60px;width:123.00px;height:8.00px;background:#222;"></div>
<div class="t" style="top:393.40px;left:400.00px;color:#b4b4b4;font-size:3.9px;transform:scaleY(1.12);transform-origin:0 50%;">File</div>
<div class="t" style="top:393.10px;right:286.00px;color:#ddd;font-size:4.3px;">/Users/thomas/Desktop/slow-breaths/assets/cat.jpg</div>
<div class="a" style="left:399.00px;top:400.60px;width:29.00px;height:8.00px;background:#262626;"></div>
<div class="a" style="left:428.00px;top:400.60px;width:123.00px;height:8.00px;background:#1f1f1f;"></div>
<div class="t" style="top:401.40px;left:400.00px;color:#b4b4b4;font-size:3.9px;transform:scaleY(1.12);transform-origin:0 50%;">Resolution</div>
<div class="t" style="top:401.10px;left:451.00px;width:60px;text-align:center;color:#ddd;">1200</div>
<div class="t" style="top:401.10px;right:279.00px;color:#ddd;">1200</div>
<div class="a" style="left:399.00px;top:408.60px;width:29.00px;height:33.20px;background:#262626;"></div>
<div class="a" style="left:428.00px;top:408.60px;width:123.00px;height:33.20px;background:#000;"></div>
<div class="t" style="top:422.00px;left:400.00px;color:#b4b4b4;font-size:3.9px;transform:scaleY(1.12);transform-origin:0 50%;">Image</div>
<svg class="a" style="left:473.1px;top:408.9px" width="32.6" height="32.5" viewBox="0 0 32.6 32.5"><defs><filter id="cb" x="-20%" y="-20%" width="140%" height="140%"><feGaussianBlur stdDeviation="0.45"/></filter><filter id="ctx" x="0" y="0" width="100%" height="100%"><feTurbulence type="fractalNoise" baseFrequency="0.9" numOctaves="2" seed="3" result="n"/><feColorMatrix in="n" type="matrix" values="0 0 0 0 0.25  0 0 0 0 0.15  0 0 0 0 0.05  2.4 0 0 0 -1.0" result="a"/><feComposite in="a" in2="SourceGraphic" operator="in"/></filter></defs><rect width="32.6" height="32.5" fill="#2a88e6"/><g filter="url(#cb)"><path d="M4 0 L25 0 L23 5 L25 12 L28 22 L21 20 L15 23 L12 29 L9 25 L9 17 L6 9 Z" fill="#b89060"/><path d="M5 0 L22 0 L20 4 L14 8 L8 7 Z" fill="#5a3418"/><path d="M9 10 L21 9 L25 15 L20 20 L14 22 L10 18 Z" fill="#e4cc98"/><path d="M18 1 L25 0 L23 6 Z" fill="#ece0c0"/></g><g filter="url(#ctx)"><path d="M4 0 L25 0 L23 5 L25 12 L28 22 L21 20 L15 23 L12 29 L9 25 L9 17 L6 9 Z" fill="#000"/></g><circle cx="13" cy="15" r="1.3" fill="#403018" opacity="0.8"/><circle cx="19" cy="14" r="1.2" fill="#403018" opacity="0.8"/></svg>
<div class="a" style="left:399.00px;top:441.80px;width:29.00px;height:8.00px;background:#262626;"></div>
<div class="a" style="left:428.00px;top:441.80px;width:123.00px;height:8.00px;background:#1a1a1a;"></div>
<div class="t" style="top:442.60px;left:400.00px;color:#b4b4b4;font-size:3.9px;transform:scaleY(1.12);transform-origin:0 50%;">Variant</div>
<div class="t" style="top:442.30px;left:429.00px;color:#ddd;">Sampler</div>
<div class="t" style="top:442.30px;right:279.00px;color:#ddd;font-size:4px;">&#9660;</div>
<div class="a" style="left:399.00px;top:449.80px;width:29.00px;height:8.00px;background:#262626;"></div>
<div class="a" style="left:428.00px;top:449.80px;width:123.00px;height:8.00px;background:#1a1a1a;"></div>
<div class="t" style="top:450.60px;left:400.00px;color:#b4b4b4;font-size:3.9px;transform:scaleY(1.12);transform-origin:0 50%;">Wrap S / T</div>
<div class="t" style="top:450.30px;left:429.00px;color:#ddd;">CLAMP</div>
<div class="t" style="top:450.30px;left:486.00px;color:#ddd;">&#9660; CLAMP</div>
<div class="t" style="top:450.30px;right:279.00px;color:#ddd;font-size:4px;">&#9660;</div>
<div class="a" style="left:399.00px;top:457.80px;width:29.00px;height:8.20px;background:#262626;"></div>
<div class="a" style="left:428.00px;top:457.80px;width:123.00px;height:8.20px;background:#1a1a1a;"></div>
<div class="t" style="top:458.70px;left:400.00px;color:#b4b4b4;font-size:3.9px;transform:scaleY(1.12);transform-origin:0 50%;">Filter - / +</div>
<div class="t" style="top:458.30px;left:429.00px;color:#ddd;">LINEAR</div>
<div class="t" style="top:458.30px;left:486.00px;color:#ddd;">&#9660; LINEAR</div>
<div class="t" style="top:458.30px;right:279.00px;color:#ddd;font-size:4px;">&#9660;</div></div>
<div class="a" style="left:210.5px;top:375.8px;width:1.2px;height:1.2px;background:#777"></div>
<div class="a" style="left:210.5px;top:463.8px;width:1.2px;height:1.2px;background:#777"></div>
<div id="render" class="a"><svg width="270.4" height="271.5" viewBox="0 0 270.4 271.5" preserveAspectRatio="none" style="position:absolute;left:0.4px;top:8.8px"><defs><linearGradient id="rg0" gradientUnits="userSpaceOnUse" x1="0" y1="0" x2="270.4" y2="0"><stop offset="0" stop-color="#ffe000"/><stop offset="0.25" stop-color="#f8f800"/><stop offset="0.35" stop-color="#f6ff00"/><stop offset="0.365" stop-color="#f0f850"/><stop offset="0.5" stop-color="#eef860"/><stop offset="0.75" stop-color="#eef4a8"/><stop offset="1" stop-color="#eef8ff"/></linearGradient><linearGradient id="rg1" gradientUnits="userSpaceOnUse" x1="0" y1="0" x2="270.4" y2="0"><stop offset="0" stop-color="#ffcc20"/><stop offset="0.25" stop-color="#f4e020"/><stop offset="0.35" stop-color="#e8ec30"/><stop offset="0.365" stop-color="#dcf060"/><stop offset="0.5" stop-color="#d0ee70"/><stop offset="0.75" stop-color="#b8f0b0"/><stop offset="1" stop-color="#98f4f0"/></linearGradient><linearGradient id="rm1" gradientUnits="userSpaceOnUse" x1="0" y1="0.0" x2="0" y2="67.875"><stop offset="0" stop-color="#000"/><stop offset="1" stop-color="#fff"/></linearGradient><mask id="rk1" maskUnits="userSpaceOnUse" x="-5" y="-5" width="280.4" height="281.5"><rect x="-5" y="-5" width="280.4" height="281.5" fill="url(#rm1)"/></mask><linearGradient id="rg2" gradientUnits="userSpaceOnUse" x1="0" y1="0" x2="270.4" y2="0"><stop offset="0" stop-color="#ff8070"/><stop offset="0.25" stop-color="#e8a078"/><stop offset="0.5" stop-color="#98d4b0"/><stop offset="0.75" stop-color="#78e8c8"/><stop offset="1" stop-color="#58f0e0"/></linearGradient><linearGradient id="rm2" gradientUnits="userSpaceOnUse" x1="0" y1="67.875" x2="0" y2="135.75"><stop offset="0" stop-color="#000"/><stop offset="1" stop-color="#fff"/></linearGradient><mask id="rk2" maskUnits="userSpaceOnUse" x="-5" y="-5" width="280.4" height="281.5"><rect x="-5" y="-5" width="280.4" height="281.5" fill="url(#rm2)"/></mask><linearGradient id="rg3" gradientUnits="userSpaceOnUse" x1="0" y1="0" x2="270.4" y2="0"><stop offset="0" stop-color="#ff30b0"/><stop offset="0.25" stop-color="#e850c0"/><stop offset="0.5" stop-color="#a890d0"/><stop offset="0.75" stop-color="#68c0e0"/><stop offset="1" stop-color="#30e0e0"/></linearGradient><linearGradient id="rm3" gradientUnits="userSpaceOnUse" x1="0" y1="135.75" x2="0" y2="203.625"><stop offset="0" stop-color="#000"/><stop offset="1" stop-color="#fff"/></linearGradient><mask id="rk3" maskUnits="userSpaceOnUse" x="-5" y="-5" width="280.4" height="281.5"><rect x="-5" y="-5" width="280.4" height="281.5" fill="url(#rm3)"/></mask><linearGradient id="rg4" gradientUnits="userSpaceOnUse" x1="0" y1="0" x2="270.4" y2="0"><stop offset="0" stop-color="#ff10d0"/><stop offset="0.25" stop-color="#e020d0"/><stop offset="0.5" stop-color="#a070e0"/><stop offset="0.75" stop-color="#50a8e0"/><stop offset="1" stop-color="#10d8e0"/></linearGradient><linearGradient id="rm4" gradientUnits="userSpaceOnUse" x1="0" y1="203.625" x2="0" y2="271.5"><stop offset="0" stop-color="#000"/><stop offset="1" stop-color="#fff"/></linearGradient><mask id="rk4" maskUnits="userSpaceOnUse" x="-5" y="-5" width="280.4" height="281.5"><rect x="-5" y="-5" width="280.4" height="281.5" fill="url(#rm4)"/></mask><linearGradient id="rstr" gradientUnits="userSpaceOnUse" x1="0" y1="0" x2="0" y2="150">
<stop offset="0" stop-color="#a8ff00" stop-opacity="0"/><stop offset="0.3" stop-color="#b0ff00" stop-opacity="0.25"/><stop offset="0.55" stop-color="#98ff08" stop-opacity="0.6"/><stop offset="0.8" stop-color="#7aff10" stop-opacity="0.92"/><stop offset="1" stop-color="#60ff30" stop-opacity="1"/>
</linearGradient>
<linearGradient id="rstr2" gradientUnits="userSpaceOnUse" x1="0" y1="20" x2="0" y2="200">
<stop offset="0" stop-color="#ff8060" stop-opacity="0"/><stop offset="0.6" stop-color="#ff8060" stop-opacity="0.35"/><stop offset="1" stop-color="#ff8060" stop-opacity="0"/>
</linearGradient>
<filter id="rb1" x="-30%" y="-30%" width="160%" height="160%"><feGaussianBlur stdDeviation="1.1"/></filter>
<filter id="rb2" x="-30%" y="-30%" width="160%" height="160%"><feGaussianBlur stdDeviation="3"/></filter>
<filter id="rtx" x="-10%" y="-10%" width="120%" height="120%"><feGaussianBlur in="SourceGraphic" stdDeviation="1.1" result="bl"/><feTurbulence type="fractalNoise" baseFrequency="0.28" numOctaves="2" seed="7" result="n"/><feColorMatrix in="n" type="matrix" values="0 0 0 0 0  0 0 0 0 0  0 0 0 0 0  3.2 0 0 0 -1.1" result="a"/><feComposite in="bl" in2="a" operator="in"/></filter>
</defs><rect x="-5" y="-5" width="280.4" height="281.5" fill="url(#rg0)"/><rect x="-5" y="-5" width="280.4" height="281.5" fill="url(#rg1)" mask="url(#rk1)"/><rect x="-5" y="-5" width="280.4" height="281.5" fill="url(#rg2)" mask="url(#rk2)"/><rect x="-5" y="-5" width="280.4" height="281.5" fill="url(#rg3)" mask="url(#rk3)"/><rect x="-5" y="-5" width="280.4" height="281.5" fill="url(#rg4)" mask="url(#rk4)"/><rect x="17" y="30" width="8" height="170" fill="url(#rstr2)" filter="url(#rb1)"/><rect x="36" y="30" width="6" height="150" fill="url(#rstr2)" opacity="0.6" filter="url(#rb1)"/><rect x="58" y="20" width="12" height="150" fill="url(#rstr)" opacity="0.45" filter="url(#rb2)"/><rect x="70" y="0" width="26" height="160" fill="url(#rstr)" filter="url(#rb1)"/><g filter="url(#rb1)"><path d="M29 209 Q28 196 32 188 Q38 178 50 174 Q60 170 66 152 L96 152 Q97 172 102 182 L108 197 L120 221 L96 223.6 L73 223.6 Q62 226 55.5 232 L49.6 252.8 Q40 242 35 232 Q30 226 29 220 Z" fill="#48fa90" opacity="0.45"/><path d="M68 156 L96 156 Q99 176 105 188.5 L120 221 L87.6 223.6 Q70 225 58 229 Q50 220 49.6 209 Q48 194 52 184 Q62 176 66 166 Z" fill="#38ff80" opacity="0.6"/><path d="M33 224 Q42 228 56 234 Q54 244 49.6 252.8 Q40 240 33 224 Z" fill="#40e8b0" opacity="0.6"/></g><g filter="url(#rtx)"><path d="M29 209 Q28 196 32 188 Q38 178 50 174 Q60 170 66 152 L96 152 Q97 172 102 182 L108 197 L120 221 L96 223.6 L73 223.6 Q62 226 55.5 232 L49.6 252.8 Q40 242 35 232 Q30 226 29 220 Z" fill="#40ff88"/><path d="M68 156 L96 156 Q99 176 105 188.5 L120 221 L87.6 223.6 Q70 225 58 229 Q50 220 49.6 209 Q48 194 52 184 Q62 176 66 166 Z" fill="#30ff80"/><ellipse cx="48" cy="176" rx="12" ry="6" fill="#60f090" opacity="0.5"/></g><circle cx="61" cy="206" r="5" fill="none" stroke="#a05890" stroke-width="1.4" opacity="0.45" filter="url(#rb1)"/><circle cx="90.5" cy="194" r="4.5" fill="none" stroke="#a05890" stroke-width="1.4" opacity="0.4" filter="url(#rb1)"/></svg><div class="a" style="left:270.8px;top:8.8px;width:2px;height:272px;background:#101820"></div></div>
<div id="rtitle" class="a"></div>
<div class="a" style="left:557.6px;top:10.8px;width:3.6px;height:3.6px;border-radius:50%;background:#c8c8cc"></div>
<div class="a" style="left:563.8px;top:10.8px;width:3.6px;height:3.6px;border-radius:50%;background:#c8c8cc"></div>
<div class="a" style="left:570px;top:10.8px;width:3.6px;height:3.6px;border-radius:50%;background:#c8c8cc"></div>
<div class="t" style="left:671.5px;top:8.9px;width:40px;text-align:center;line-height:8.8px;font-size:4.4px;color:#777">Render</div>
<div class="a" style="left:555.6px;top:17.3px;width:272.4px;height:0.5px;background:#999"></div>
<svg class="a" style="left:591.5px;top:287.5px" width="6" height="8" viewBox="0 0 6 8"><path d="M0.5 0.5 L0.5 6.5 L2 5.2 L3.2 7.5 L4 7.1 L2.9 4.9 L4.8 4.9 Z" fill="#222" stroke="#ccc" stroke-width="0.4" opacity="0.7"/></svg>
</body></html>
